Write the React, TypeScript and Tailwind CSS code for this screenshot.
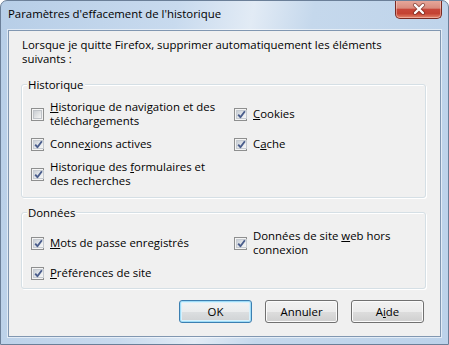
import React from "react";

const font = { fontFamily: '"Open Sans", "Noto Sans", sans-serif' };

function Check({ checked }: { checked: boolean }) {
  return (
    <span className="w-[13px] h-[13px] shrink-0 border border-[#8e8f8f] bg-[#f4f4f4] p-[1px] flex">
      <span
        className={
          checked
            ? "flex-1 flex items-center justify-center border border-[#c6cbd1] bg-[linear-gradient(135deg,#c8ced6_0%,#e4e7ea_50%,#f7f7f7_100%)]"
            : "flex-1 border border-[#bfc3c8] bg-[linear-gradient(135deg,#c9cdd2_0%,#dfe1e3_50%,#f4f4f4_100%)]"
        }
      >
        {checked && (
          <svg width="9" height="9" viewBox="0 0 9 9">
            <path d="M1.2 4.6 L3.4 7.2 L7.9 1.2" fill="none" stroke="#4a5d8c" strokeWidth="1.9" strokeLinejoin="round" />
          </svg>
        )}
      </span>
    </span>
  );
}

function Item({ checked, children }: { checked: boolean; children: React.ReactNode }) {
  return (
    <div className="flex items-center gap-[6px]">
      <Check checked={checked} />
      <span className="leading-[14px] whitespace-nowrap">{children}</span>
    </div>
  );
}

function Group({ title, pb, children }: { title: string; pb: string; children: React.ReactNode }) {
  return (
    <div className={`ml-[12px] w-[405px] border border-[#d5dfe5] rounded-[3px] shadow-[inset_1px_1px_0_#ffffff,1px_1px_0_#ffffff] ${pb}`}>
      <div className="-mt-[8px] ml-[5px] px-[1px] w-fit bg-[#f0f0f0] leading-[15px]">{title}</div>
      {children}
    </div>
  );
}

function Btn({ children, def }: { children: React.ReactNode; def?: boolean }) {
  return (
    <button
      className={
        def
          ? "w-[73px] h-[23px] rounded-[3px] border border-[#3c7fb1] bg-[linear-gradient(#f2f4f5_0%,#eaeced_50%,#dcdfe1_51%,#cfd2d4_100%)] shadow-[inset_0_0_0_1px_#9fdcf7,inset_0_0_0_2px_#d8f1fc] text-[11.4px] leading-[15px] text-black"
          : "w-[73px] h-[23px] rounded-[3px] border border-[#707070] bg-[linear-gradient(#f2f2f2_0%,#ebebeb_50%,#dddddd_51%,#cfcfcf_100%)] shadow-[inset_0_0_0_1px_#fbfbfb] text-[11.4px] leading-[15px] text-black"
      }
      style={font}
    >
      {children}
    </button>
  );
}

export default function App() {
  return (
    <div
      className="w-[449px] h-[345px] overflow-hidden rounded-t-[7px] border border-[#6b7f98] flex flex-col bg-[linear-gradient(100deg,#b7cee7_0%,#c8daee_35%,#e2ebf5_50%,#c5d8ec_62%,#bcd2ea_100%)] text-[11.4px] text-black"
      style={font}
    >
      <div className="h-[29px] shrink-0 flex items-start">
        <div className="pl-[7px] pt-[5px] leading-[15px] whitespace-nowrap flex-1">Paramètres d'effacement de l'historique</div>
        <div className="-mt-[1px] mr-[6px] w-[47px] h-[19px] rounded-b-[5px] border border-[#7a2a22] border-t-0 bg-[linear-gradient(#e8aa9d_0%,#d98c7e_45%,#c7473a_52%,#c44232_75%,#e4866c_100%)] shadow-[inset_0_0_0_1px_rgba(255,220,210,0.45)] flex items-center justify-center">
          <svg width="14" height="12" viewBox="0 0 14 12">
            <path d="M3 2 L11 10 M11 2 L3 10" stroke="#5a1d16" strokeWidth="4" strokeLinecap="round" opacity="0.55" />
            <path d="M3 2 L11 10 M11 2 L3 10" stroke="#ffffff" strokeWidth="2.4" strokeLinecap="round" />
          </svg>
        </div>
      </div>
      <div className="ml-[7px] w-[433px] h-[307px] shrink-0 bg-[#f0f0f0] border border-[#8197b1] shadow-[0_0_0_1px_rgba(255,255,255,0.55)] flex flex-col">
        <div className="pl-[13px] pt-[7px] leading-[14px] whitespace-nowrap">
          Lorsque je quitte Firefox, supprimer automatiquement les éléments
          <br />
          suivants :
        </div>
        <div className="mt-[18px]">
          <Group title="Historique" pb="pb-[9px]">
            <div className="mt-[8px] pl-[9px] grid grid-cols-[203px_1fr] gap-y-[9px] items-center">
              <Item checked={false}>
                <u>H</u>istorique de navigation et des
                <br />
                téléchargements
              </Item>
              <Item checked>
                <u>C</u>ookies
              </Item>
              <Item checked>
                Conne<u>x</u>ions actives
              </Item>
              <Item checked>
                C<u>a</u>che
              </Item>
              <Item checked>
                Historique des <u>f</u>ormulaires et
                <br />
                des recherches
              </Item>
            </div>
          </Group>
        </div>
        <div className="mt-[14px]">
          <Group title="Données" pb="pb-[8px]">
            <div className="mt-[9px] pl-[9px] grid grid-cols-[203px_1fr] gap-y-[9px] items-center">
              <Item checked>
                <u>M</u>ots de passe enregistrés
              </Item>
              <Item checked>
                Données de site <u>w</u>eb hors
                <br />
                connexion
              </Item>
              <Item checked>
                <u>P</u>références de site
              </Item>
            </div>
          </Group>
        </div>
        <div className="mt-[11px] mr-[16px] flex justify-end gap-[13px]">
          <Btn def>OK</Btn>
          <Btn>Annuler</Btn>
          <Btn>
            A<u>i</u>de
          </Btn>
        </div>
      </div>
    </div>
  );
}
